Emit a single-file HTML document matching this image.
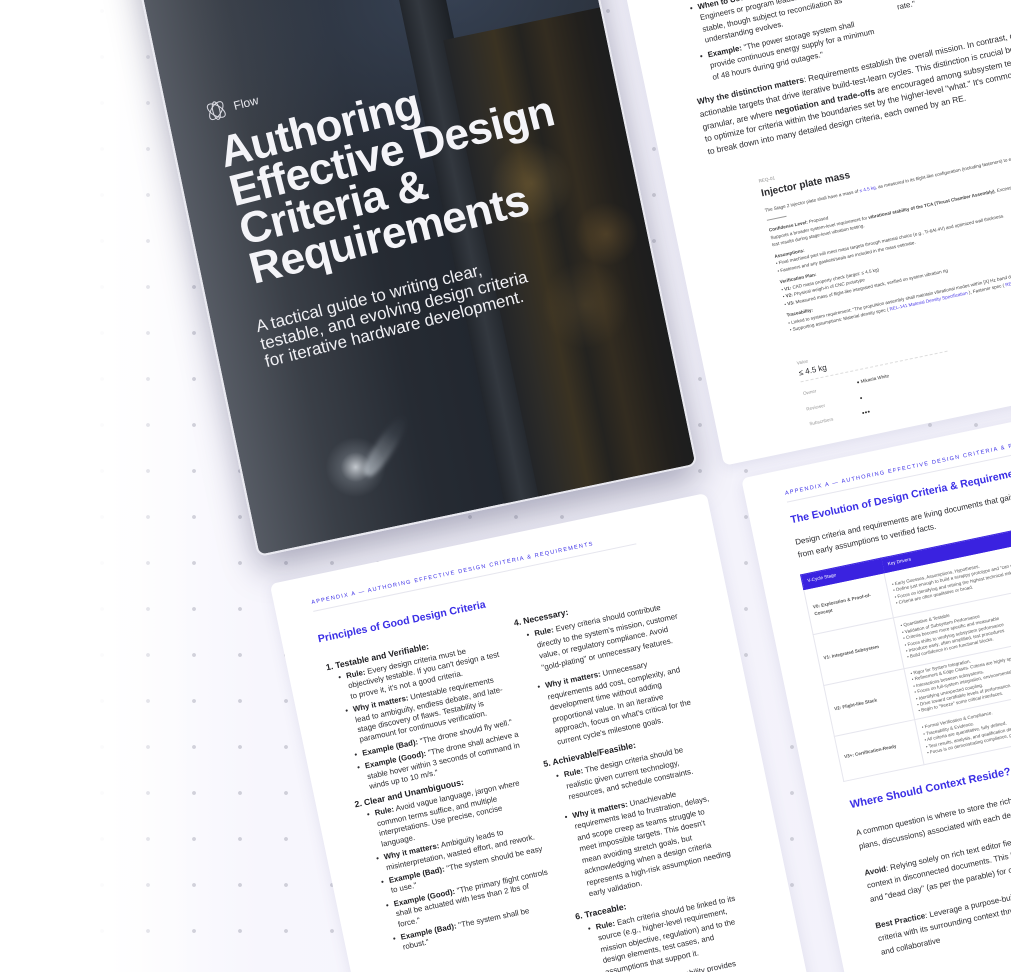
<!DOCTYPE html>
<html><head><meta charset="utf-8">
<style>
*{margin:0;padding:0;box-sizing:border-box}
html,body{width:1011px;height:972px;overflow:hidden}
body{position:relative;font-family:"Liberation Sans",sans-serif;
background:linear-gradient(90deg,#ffffff 0,#ffffff 90px,#f7f6fd 260px,#f2f1fa 100%);}
.dots{position:absolute;inset:0;background-image:radial-gradient(circle,#cfcfd9 1.7px,transparent 2.2px);background-size:46px 46px;background-position:-13px -12px}
.fade{position:absolute;inset:0;background:linear-gradient(90deg,#fff 0,#fff 95px,rgba(255,255,255,.6) 130px,rgba(255,255,255,0) 200px)}
.stage{position:absolute;left:258px;top:557px;transform:rotate(-11.8deg);transform-origin:0 0}
.cover{position:absolute;left:0;top:-720px;width:449px;height:720px;border-radius:9px;overflow:hidden;
border:2px solid #e9e9f0;box-shadow:0 14px 34px rgba(30,30,70,.35);
background:
radial-gradient(ellipse 30px 30px at 112px 650px,rgba(230,235,240,.8),rgba(200,210,220,.2) 50%,rgba(0,0,0,0) 100%),
radial-gradient(ellipse 260px 200px at 300px 200px,rgba(70,85,110,.6),rgba(0,0,0,0)),
linear-gradient(90deg,#565b64 0%,#3a3f47 18%,#262b33 40%,#20252d 65%,#252a31 100%);}
.beam{position:absolute;left:112px;top:590px;width:18px;height:70px;transform:rotate(45deg);transform-origin:50% 100%;
background:linear-gradient(0deg,rgba(220,228,235,.55),rgba(150,165,180,.1) 70%,rgba(0,0,0,0));border-radius:50% 50% 40% 40%;filter:blur(2px)}
.tower{position:absolute;left:285px;top:250px;width:170px;height:470px;
background:linear-gradient(90deg,#232528 0,#2c2b28 12%,#3a3222 30%,#242320 45%,#332c20 60%,#22201d 80%,#1a1c1f 100%)}
.pillar{position:absolute;left:250px;top:0;width:46px;height:720px;background:linear-gradient(90deg,#22262c,#33383f 40%,#1c2025)}
.lights{position:absolute;left:300px;top:330px;width:140px;height:260px;
background:radial-gradient(circle at 30% 30%,rgba(200,160,80,.25) 0,rgba(0,0,0,0) 20%),radial-gradient(circle at 75% 55%,rgba(200,150,70,.22) 0,rgba(0,0,0,0) 18%),radial-gradient(circle at 50% 80%,rgba(180,140,70,.18) 0,rgba(0,0,0,0) 20%)}
.logo{position:absolute;left:37px;top:262px;display:flex;align-items:center;gap:7px;color:#e8e8ee;font-size:12px;transform:rotate(-2.5deg);transform-origin:0 0}
.title{position:absolute;left:43px;top:296px;color:#f4f4f8;font-weight:bold;font-size:44px;line-height:40px;letter-spacing:-.6px;transform:rotate(-2.5deg);transform-origin:0 0;white-space:nowrap}
.sub{position:absolute;left:43px;top:484px;color:#f0f0f4;font-size:17px;line-height:18px;transform:rotate(-2.5deg);transform-origin:0 0;white-space:nowrap}
.page{position:absolute;background:#fff;border-radius:7px;box-shadow:0 3px 14px rgba(80,80,140,.12);overflow:hidden;color:#2a2a2e}
.lbl{position:absolute;font-size:5.6px;letter-spacing:1.25px;color:#3a2ee6;text-transform:uppercase;white-space:nowrap;padding-bottom:5px;border-bottom:1px solid #e6e6ee;width:330px}
.h{position:absolute;font-size:10.5px;font-weight:bold;color:#3a2ee6;white-space:nowrap}
.col{position:absolute;font-size:7.8px;line-height:10.4px}
.col h4{font-size:8.6px;font-weight:bold;line-height:12px;margin:3px 0 2px;color:#1e1e22}
.col ul{list-style:none;margin-left:18px}
.col li{position:relative;margin-bottom:3px}
.col li:before{content:"•";position:absolute;left:-8px;top:0}
.col b{color:#1e1e22}
.rc{line-height:11.5px}
.rc li{margin-bottom:7px}
.rc h4{margin:6px 0 3px}
.p{position:absolute;font-size:7.8px;line-height:11.5px}
.small{font-size:4.6px;line-height:7.5px;color:#444}
table{border-collapse:collapse;font-size:4.6px;line-height:6.4px;color:#555}
td,th{border:1px solid #e6e6ee;vertical-align:middle;padding:3px 5px;text-align:left}
th{background:#3a22e0;color:#fff;font-weight:normal;height:15px;border-color:#3a22e0}
a{color:#4a3ae8;text-decoration:none}
</style></head><body>
<div class="dots"></div><div class="fade"></div>
<div class="stage">

<div class="cover">
  <div class="pillar"></div>
  <div class="tower"></div>
  <div class="lights"></div>
  <div class="beam"></div>
  <div class="logo">
    <svg width="22" height="22" viewBox="0 0 22 22" fill="none" stroke="#dcdce4" stroke-width="1">
      <ellipse cx="11" cy="11" rx="10" ry="5" transform="rotate(45 11 11)"/>
      <ellipse cx="11" cy="11" rx="10" ry="5" transform="rotate(-45 11 11)"/>
      <ellipse cx="11" cy="11" rx="9" ry="3.5" transform="rotate(90 11 11)"/>
    </svg><span>Flow</span>
  </div>
  <div class="title">Authoring<br>Effective Design<br>Criteria &amp;<br>Requirements</div>
  <div class="sub">A tactical guide to writing clear,<br>testable, and evolving design criteria<br>for iterative hardware development.</div>
</div>

<div class="page" style="left:6px;top:29px;width:446px;height:720px">
  <div class="lbl" style="left:37px;top:24px">Appendix A — Authoring Effective Design Criteria &amp; Requirements</div>
  <div class="h" style="left:36px;top:58px">Principles of Good Design Criteria</div>
  <div class="col" style="left:38px;top:84px;width:176px">
    <h4>1. Testable and Verifiable:</h4>
    <ul>
      <li><b>Rule:</b> Every design criteria must be objectively testable. If you can't design a test to prove it, it's not a good criteria.</li>
      <li><b>Why it matters:</b> Untestable requirements lead to ambiguity, endless debate, and late-stage discovery of flaws. Testability is paramount for continuous verification.</li>
      <li><b>Example (Bad):</b> "The drone should fly well."</li>
      <li><b>Example (Good):</b> "The drone shall achieve a stable hover within 3 seconds of command in winds up to 10 m/s."</li>
    </ul>
    <h4>2. Clear and Unambiguous:</h4>
    <ul>
      <li><b>Rule:</b> Avoid vague language, jargon where common terms suffice, and multiple interpretations. Use precise, concise language.</li>
      <li><b>Why it matters:</b> Ambiguity leads to misinterpretation, wasted effort, and rework.</li>
      <li><b>Example (Bad):</b> "The system should be easy to use."</li>
      <li><b>Example (Good):</b> "The primary flight controls shall be actuated with less than 2 lbs of force."</li>
      <li><b>Example (Bad):</b> "The system shall be robust."</li>
    </ul>
  </div>
  <div class="col rc" style="left:231px;top:76px;width:165px">
    <h4>4. Necessary:</h4>
    <ul>
      <li><b>Rule:</b> Every criteria should contribute directly to the system's mission, customer value, or regulatory compliance. Avoid "gold-plating" or unnecessary features.</li>
      <li><b>Why it matters:</b> Unnecessary requirements add cost, complexity, and development time without adding proportional value. In an iterative approach, focus on what's critical for the current cycle's milestone goals.</li>
    </ul>
    <h4>5. Achievable/Feasible:</h4>
    <ul>
      <li><b>Rule:</b> The design criteria should be realistic given current technology, resources, and schedule constraints.</li>
      <li><b>Why it matters:</b> Unachievable requirements lead to frustration, delays, and scope creep as teams struggle to meet impossible targets. This doesn't mean avoiding stretch goals, but acknowledging when a design criteria represents a high-risk assumption needing early validation.</li>
    </ul>
    <h4>6. Traceable:</h4>
    <ul>
      <li><b>Rule:</b> Each criteria should be linked to its source (e.g., higher-level requirement, mission objective, regulation) and to the design elements, test cases, and assumptions that support it.</li>
      <li><b>Why it matters:</b> Traceability provides impact of change analysis across the system.</li>
    </ul>
  </div>
</div>

<div class="page" style="left:475px;top:-714px;width:600px;height:720px">
  <div class="col" style="left:50px;top:222px;width:190px;line-height:11.5px">
    <ul>
      <li><b>Owner:</b> Systems engineering or the program lead responsible for mission-level achievement of goals and the overall success criteria.</li>
      <li><b>When to Use:</b> Defined early by Systems Engineers or program leadership. Relatively stable, though subject to reconciliation as understanding evolves.</li>
      <li><b>Example:</b> "The power storage system shall provide continuous energy supply for a minimum of 48 hours during grid outages."</li>
    </ul>
  </div>
  <div class="col" style="left:245px;top:252px;width:220px;line-height:11.5px">
    <ul>
      <li><b>Owner:</b> Subsystem leads who balance performance, mass, power, schedule and cost against requirements.</li>
      <li><b>Example:</b> "The battery cell shall provide 200-220 Wh/kg energy density, measured at 25 C and a C/2 discharge rate."</li>
    </ul>
  </div>
  <div class="p" style="left:48px;top:352px;width:450px;font-size:8.3px;line-height:12.8px"><b>Why the distinction matters</b>: Requirements establish the overall mission. In contrast, design criteria provide the specific, actionable targets that drive iterative build-test-learn cycles. This distinction is crucial because design criteria, being more granular, are where <b>negotiation and trade-offs</b> are encouraged among subsystem teams. This flexibility allows engineers to optimize for criteria within the boundaries set by the higher-level "what." It's common for a single high-level requirement to break down into many detailed design criteria, each owned by an RE.</div>
  <div style="position:absolute;left:92px;top:445px;width:470px">
    <div class="small" style="color:#888">REQ-01</div>
    <div style="font-size:10px;font-weight:bold;margin:3px 0 8px">Injector plate mass</div>
    <div class="small">The Stage 2 injector plate shall have a mass of <a>≤ 4.5 kg</a>, as measured in its flight-like configuration (including fasteners) to ensure vibrational stability during system-level integration.</div>
    <div style="width:20px;border-top:1px solid #999;margin:6px 0"></div>
    <div class="small"><b>Confidence Level:</b> Proposed</div>
    <div class="small">Supports a broader system-level requirement for <b>vibrational stability of the TCA (Thrust Chamber Assembly)</b>. Excess mass at the injector can shift the center of mass, impact dynamic response, and degrade contact authority or test results during stage-level vibration testing.</div>
    <div class="small" style="margin-top:4px"><b>Assumptions:</b></div>
    <div class="small">• Final machined part will meet mass targets through material choice (e.g., Ti-6Al-4V) and optimized wall thickness.</div>
    <div class="small">• Fasteners and any gaskets/seals are included in the mass estimate.</div>
    <div class="small" style="margin-top:4px"><b>Verification Plan:</b></div>
    <div class="small">• <b>V1:</b> CAD mass property check (target: ≤ 4.5 kg)</div>
    <div class="small">• <b>V2:</b> Physical weigh-in of CNC prototype</div>
    <div class="small">• <b>V3:</b> Measured mass of flight-like integrated stack, verified on system vibration rig</div>
    <div class="small" style="margin-top:4px"><b>Traceability:</b></div>
    <div class="small">• Linked to system requirement: "The propulsion assembly shall maintain vibrational modes within [X] Hz band during FTA..."</div>
    <div class="small">• Supporting assumptions: Material density spec ( <a>REL-141 Material Density Specification</a> ), Fastener spec ( <a>REL-142 Fasteners</a> )</div>
    <div style="position:absolute;left:250px;top:150px;width:220px;height:22px;background:#f1f1f4;border-radius:4px;font-size:5px;padding:7px 10px;color:#333">⚙ REQ-1 <b>Mass</b></div>
    <div class="small" style="position:absolute;left:252px;top:140px;color:#999">Actual Value</div>
    <div class="small" style="margin-top:26px;color:#999">Value</div>
    <div style="font-size:8px;padding:2px 0 4px;border-bottom:1px dashed #ddd;width:150px">≤ 4.5 kg</div>
    <div class="small" style="margin-top:8px;color:#999">Owner <span style="margin-left:40px;color:#333">● Mikaela White</span></div>
    <div class="small" style="margin-top:8px;color:#999">Reviewer <span style="margin-left:34px;color:#333">●</span></div>
    <div class="small" style="margin-top:8px;color:#999">Subscribers <span style="margin-left:28px;color:#333">●●●</span></div>
  </div>
</div>

<div class="page" style="left:489px;top:22px;width:600px;height:720px">
  <div class="lbl" style="left:40px;top:21px">Appendix A — Authoring Effective Design Criteria &amp; Requirements</div>
  <div class="h" style="left:40px;top:45px">The Evolution of Design Criteria &amp; Requirements</div>
  <div class="p" style="left:40px;top:68px;width:300px;font-size:8px;line-height:12.5px">Design criteria and requirements are living documents that gain fidelity. They mature from early assumptions to verified facts.</div>
  <table style="position:absolute;left:38px;top:106px;width:420px">
    <tr><th style="width:82px">V-Cycle Stage</th><th>Key Drivers</th></tr>
    <tr style="height:46px"><td><b>V0: Exploration &amp; Proof-of-Concept</b></td><td>• Early Guesses, Assumptions, Hypotheses.<br>• Define just enough to build a scrappy prototype and "can we even do this?" questions.<br>• Focus on identifying and retiring the highest technical risks.<br>• Criteria are often qualitative or broad.</td></tr>
    <tr style="height:52px"><td><b>V1: Integrated Subsystem</b></td><td>• Quantitative &amp; Testable<br>• Validation of Subsystem Performance<br>• Criteria become more specific and measurable<br>• Focus shifts to verifying subsystem performance<br>• Introduce early, often simplified, test procedures<br>• Build confidence in core functional blocks.</td></tr>
    <tr style="height:50px"><td><b>V2: Flight-like Stack</b></td><td>• Rigor for System Integration.<br>• Refinement &amp; Edge Cases. Criteria are highly specific.<br>• Interactions between subsystems.<br>• Focus on full-system integration, environmental tests.<br>• Identifying unexpected coupling.<br>• Drive toward certifiable levels of performance.<br>• Begin to "freeze" some critical interfaces.</td></tr>
    <tr style="height:46px"><td><b>V3+: Certification-Ready</b></td><td>• Formal Verification &amp; Compliance.<br>• Traceability &amp; Evidence.<br>• All criteria are quantitative, fully defined.<br>• Test results, analysis, and qualification data.<br>• Focus is on demonstrating compliance, proving reliability across all operational cases.</td></tr>
  </table>
  <div class="h" style="left:40px;top:336px;font-size:11px">Where Should Context Reside? The Role of Tools</div>
  <div class="p" style="left:40px;top:364px;width:300px;font-size:8px;line-height:13.5px">A common question is where to store the rich context (design rationale, analysis, test plans, discussions) associated with each design criteria.<br><br><b>Avoid</b>: Relying solely on rich text editor fields within the requirement itself or burying context in disconnected documents. This leads to information rot, lack of traceability, and "dead clay" (as per the parable) for context.<br><br><b>Best Practice</b>: Leverage a purpose-built tool (like Flow) that integrates the design criteria with its surrounding context through dynamic links, real-time dashboards, and collaborative</div>
</div>

</div>
</body></html>
